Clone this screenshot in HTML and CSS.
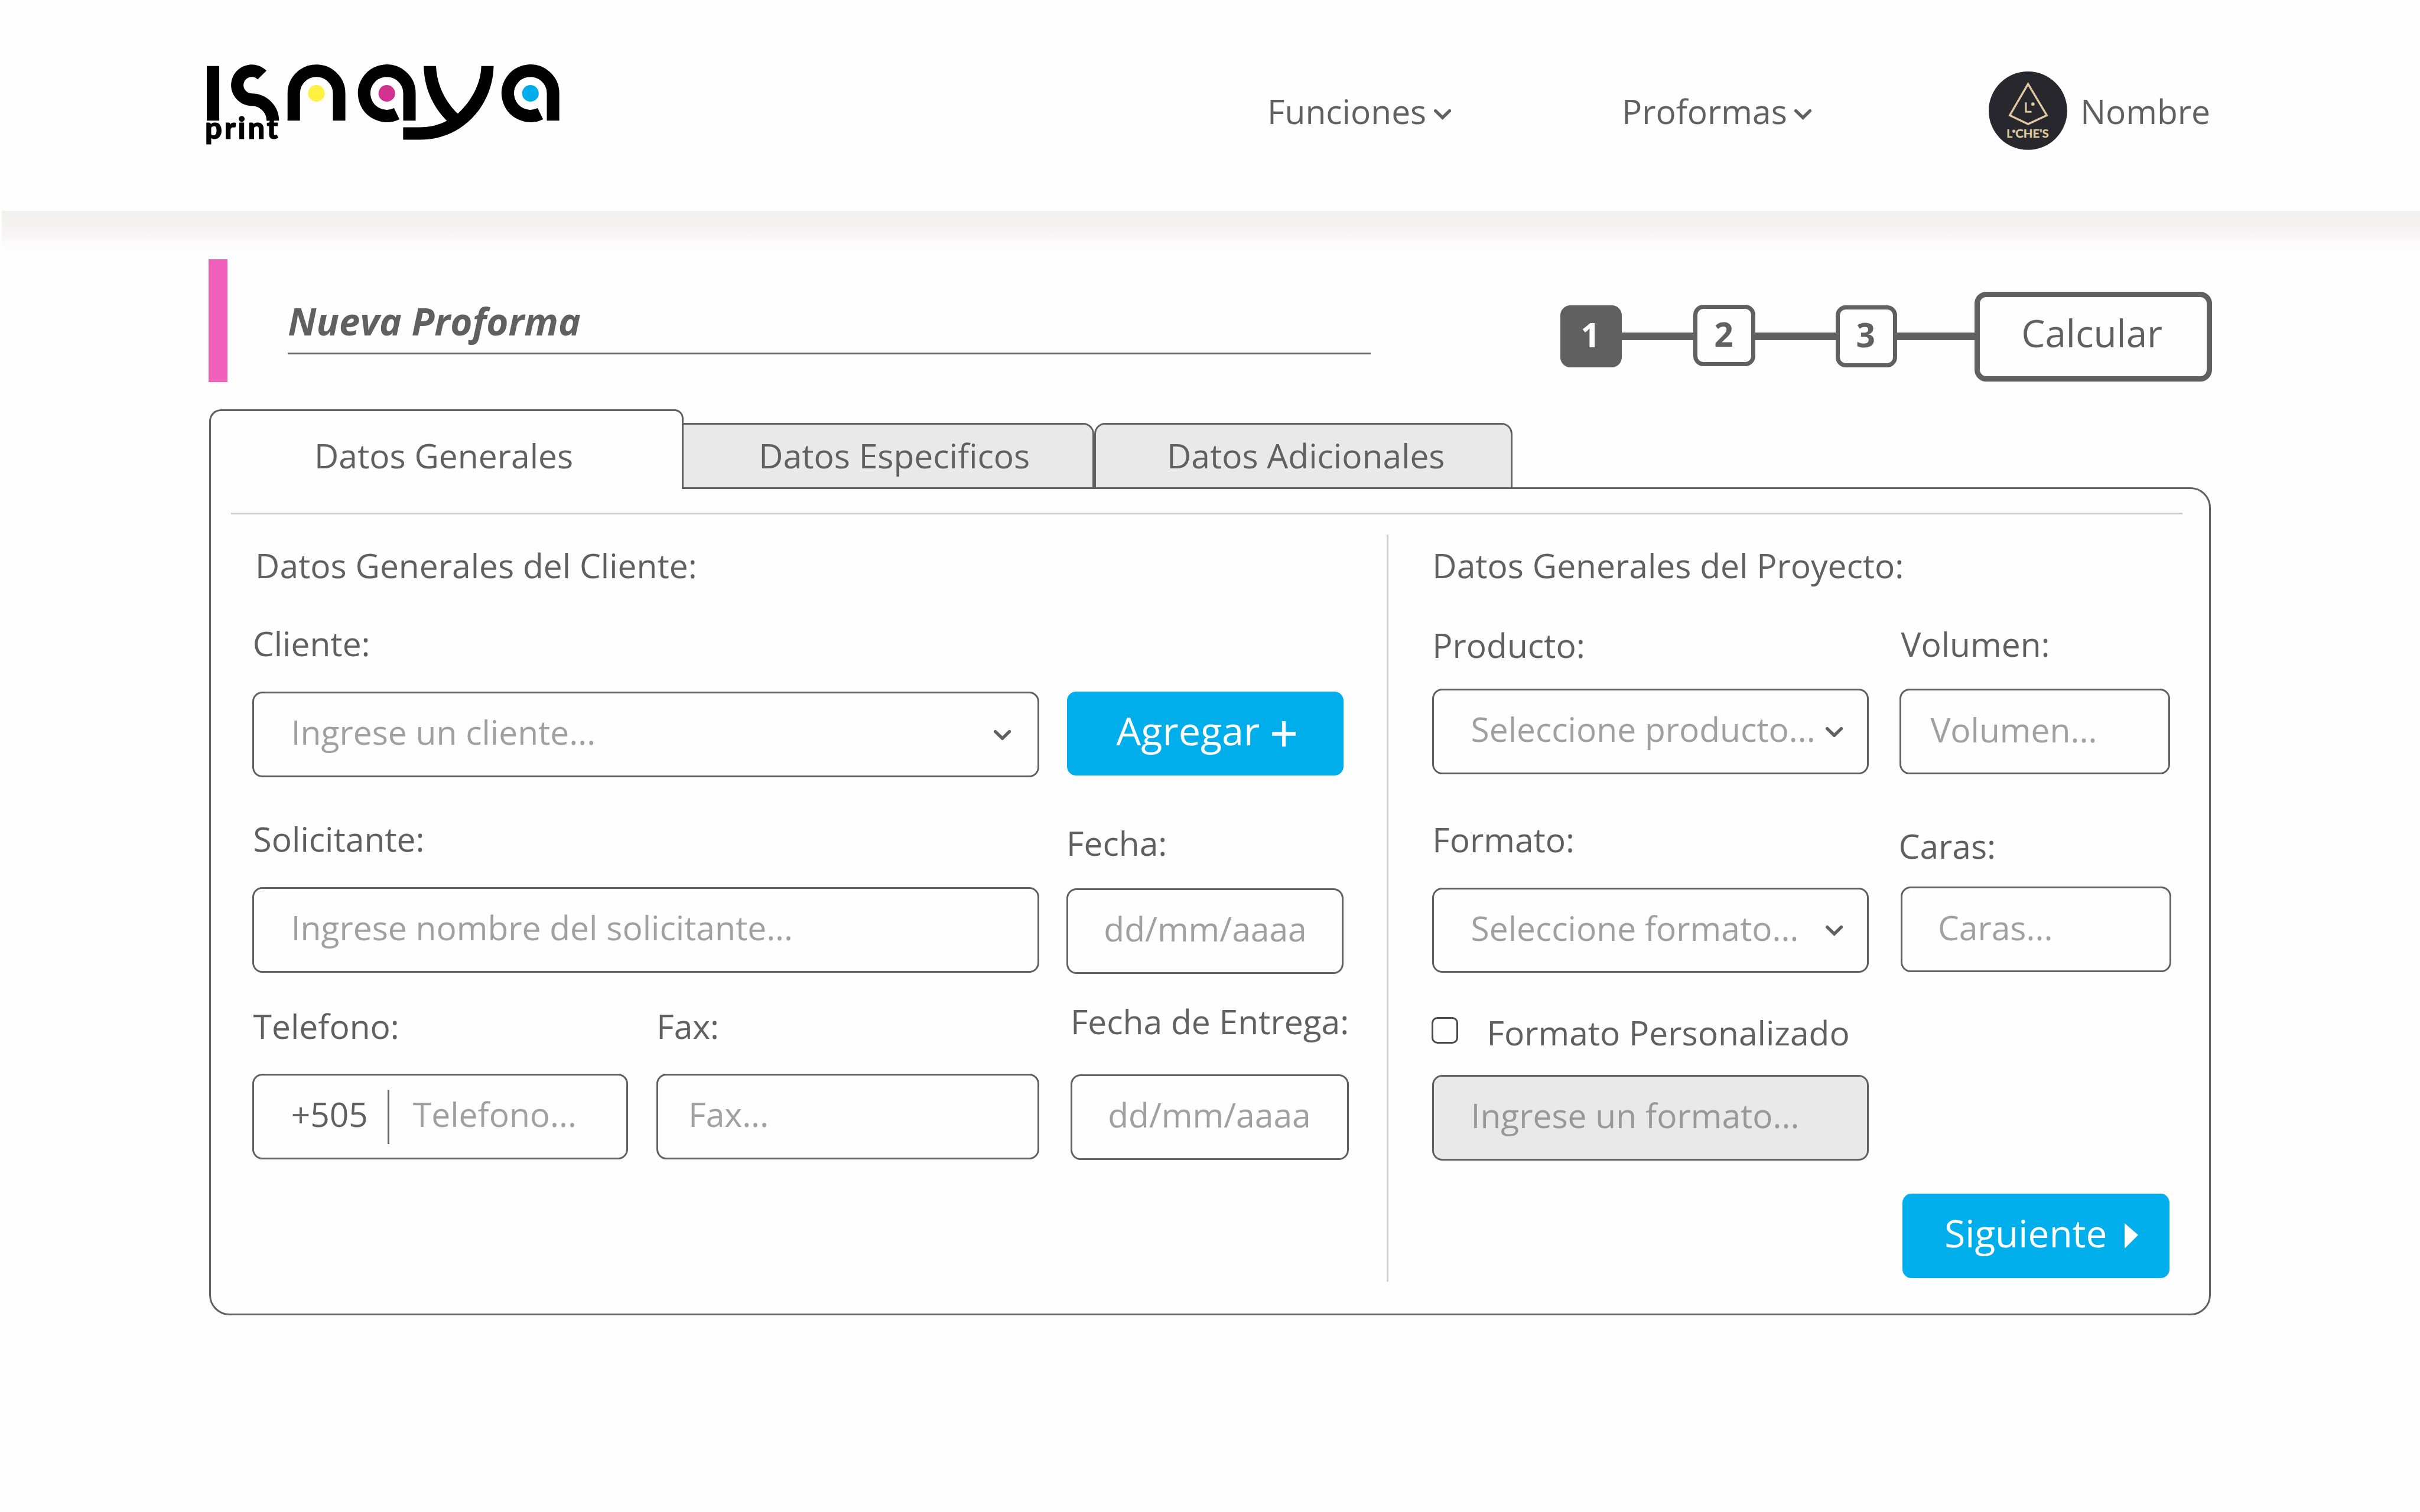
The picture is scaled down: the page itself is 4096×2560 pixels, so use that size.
FILE: index.html
```html
<!DOCTYPE html>
<html lang="es">
<head>
<meta charset="utf-8">
<title>Isnaya Print - Nueva Proforma</title>
<link rel="stylesheet" href="styles.css">
</head>
<body>
<header class="header">
  <svg class="logo" viewBox="455 140 780 185" role="img" aria-label="Isnaya print">
    <g fill="none" stroke="#000" stroke-width="27.4">
      <path d="M470 145V265.5"/>
      <path d="M578 164.9A31.8 31.8 0 1 0 555 219A46.8 46.8 0 0 1 601.8 265.5"/>
      <path d="M648 265.5V205.3A50 50 0 0 1 748 205.3V265.5"/>
      <path d="M903 265.5V205.3A49.9 49.9 0 1 0 875 250"/>
      <path d="M1219.6 265.5V205.3A49.9 49.9 0 1 0 1191.6 250"/>
    </g>
    <path d="M934.4 145H961.6C963 184 980 222 1009.6 250C1040 222 1060.5 184 1061.3 145H1088.6C1087 232 1020 307.3 928 307.3H889.1V280H924C948 280 968 275 985.5 265.7C952 232 935.5 190 934.4 145Z"/>
    <circle cx="698" cy="205.3" r="18.3" fill="#fff042"/>
    <circle cx="853.1" cy="205.3" r="18.3" fill="#d2338f"/>
    <circle cx="1169.7" cy="205.3" r="18.3" fill="#00adec"/>
    <text class="logo-sub" x="452.5" y="306" textLength="161">print</text>
  </svg>
  <nav class="nav">
    <a class="nav-item nav-funciones">Funciones<svg class="chevron" viewBox="0 0 38 23"><path d="M3.5 3.5L19 18.5L34.5 3.5"/></svg></a>
    <a class="nav-item nav-proformas">Proformas<svg class="chevron" viewBox="0 0 38 23"><path d="M3.5 3.5L19 18.5L34.5 3.5"/></svg></a>
    <a class="nav-item user">
      <svg class="avatar" viewBox="4383 158 173 173">
        <circle cx="4469.5" cy="244.5" r="86.5" fill="#27272d"/>
        <path d="M4469.8 185.5L4511 254.7L4469.8 274L4429.4 254.7Z" fill="none" stroke="#dec9a0" stroke-width="4.4"/>
        <path d="M4465 226V246.8H4477.3" fill="none" stroke="#dec9a0" stroke-width="4"/>
        <circle cx="4480.4" cy="229.8" r="3.8" fill="#dec9a0"/>
        <text class="avatar-text" x="4422.5" y="304.2">L</text>
        <circle cx="4438.6" cy="289.8" r="3.4" fill="#dec9a0"/>
        <text class="avatar-text" x="4442" y="304.2" textLength="73.5" lengthAdjust="spacingAndGlyphs">CHE'S</text>
      </svg>Nombre</a>
  </nav>
</header>
<div class="header-shadow"></div>

<main class="main">
  <section class="title-row">
    <span class="accent"></span>
    <h1 class="title">Nueva Proforma</h1>
    <div class="steps">
      <span class="step step-active">1</span>
      <span class="link link-1"></span>
      <span class="step step-2">2</span>
      <span class="link link-2"></span>
      <span class="step">3</span>
      <span class="link link-3"></span>
      <a class="calc">Calcular</a>
    </div>
  </section>

  <div class="tabs">
    <a class="tab tab-active">Datos Generales</a>
    <a class="tab tab-especificos">Datos Especificos</a>
    <a class="tab tab-adicionales">Datos Adicionales</a>
  </div>

  <section class="panel">
    <hr class="rule">
    <div class="columns">
      <div class="client">
        <h2 class="heading">Datos Generales del Cliente:</h2>
        <div class="group">
          <div class="client-main">
            <div class="label label-cliente">Cliente:</div>
            <div class="field select field-cliente">Ingrese un cliente...<svg class="chevron" viewBox="0 0 38 23"><path d="M3.5 3.5L19 18.5L34.5 3.5"/></svg></div>
            <div class="label label-solicitante">Solicitante:</div>
            <div class="field field-solicitante">Ingrese nombre del solicitante...</div>
            <div class="phones">
              <div class="phone">
                <div class="label">Telefono:</div>
                <div class="field field-phone"><span class="prefix">+505</span><span class="bar"></span>Telefono...</div>
              </div>
              <div class="fax">
                <div class="label">Fax:</div>
                <div class="field field-fax">Fax...</div>
              </div>
            </div>
          </div>
          <div class="client-side">
            <a class="button add">Agregar<svg class="plus" viewBox="0 0 52 56"><path d="M26 0V56M0 28H52"/></svg></a>
            <div class="label label-fecha">Fecha:</div>
            <div class="field field-fecha">dd/mm/aaaa</div>
            <div class="delivery">
              <div class="label">Fecha de Entrega:</div>
              <div class="field field-entrega">dd/mm/aaaa</div>
            </div>
          </div>
        </div>
      </div>
      <span class="divider"></span>
      <div class="project">
        <h2 class="heading">Datos Generales del Proyecto:</h2>
        <div class="group">
          <div class="project-main">
            <div class="label label-producto">Producto:</div>
            <div class="field select field-producto">Seleccione producto...<svg class="chevron" viewBox="0 0 38 23"><path d="M3.5 3.5L19 18.5L34.5 3.5"/></svg></div>
            <div class="label label-formato">Formato:</div>
            <div class="field select field-formato">Seleccione formato...<svg class="chevron" viewBox="0 0 38 23"><path d="M3.5 3.5L19 18.5L34.5 3.5"/></svg></div>
            <div class="custom"><span class="checkbox"></span><span class="custom-text">Formato Personalizado</span></div>
            <div class="field field-custom">Ingrese un formato...</div>
          </div>
          <div class="project-side">
            <div class="label label-volumen">Volumen:</div>
            <div class="field field-volumen">Volumen...</div>
            <div class="label label-caras">Caras:</div>
            <div class="field field-caras">Caras...</div>
            <a class="button next">Siguiente<svg class="play" viewBox="0 0 30 56"><path d="M0 0L30 26L0 56Z"/></svg></a>
          </div>
        </div>
      </div>
    </div>
  </section>
</main>
</body>
</html>
```
FILE: styles.css
```css
/* The design canvas is 5334 units wide; 1rem is 100 units. */
html { font-size: calc(100vw / 53.34); }
* { box-sizing: border-box; }
body {
  margin: 0;
  background: #fefefe;
  color: #606060;
  font-family: "Open Sans", sans-serif;
  font-size: .7415rem;
  line-height: 1rem;
  min-height: 33.34rem;
  overflow: hidden;
}
h1, h2 { margin: 0; font-size: inherit; font-weight: 400; }
svg { display: block; flex: none; }

/* Header */
.header {
  display: flex;
  align-items: flex-start;
  height: 4.646rem;
  padding: 1.4rem 0 0 4.55rem;
}
.logo { width: 7.8rem; height: 1.85rem; overflow: visible; }
.logo-sub { font: 900 66px Lato, sans-serif; fill: #000; stroke: #000; stroke-width: 1.6px; stroke-linejoin: round; }
.nav { display: flex; padding-top: .18rem; margin-left: 15.585rem; }
.nav-item { display: flex; align-items: center; height: 1.76rem; white-space: nowrap; }
.nav-funciones { width: 7.811rem; }
.nav-proformas { width: 8.084rem; }
.nav-item .chevron { margin: .13rem 0 0 .16rem; }
.chevron { width: .38rem; height: .23rem; }
.chevron path { fill: none; stroke: #606060; stroke-width: 7; stroke-linecap: round; }
.avatar { width: 1.73rem; height: 1.73rem; margin: 0 .295rem .03rem 0; }
.avatar-text { font: 700 24.5px Lato, sans-serif; fill: #dec9a0; stroke: #dec9a0; stroke-width: .5px; }
.header-shadow {
  height: .9rem;
  margin-left: .04rem;
  background: linear-gradient(#f2f1f0, #f3f2f1 28%, #f5f3f4 50%, #fbf9fa 74%, #fefefe);
}

/* Title and steps */
.main { padding: .172rem 0 0 4.59rem; }
.title-row { display: flex; height: 2.71rem; }
.accent { width: .41rem; margin-left: .01rem; background: #f05fba; }
.title {
  width: 23.863rem;
  height: 2.096rem;
  margin-left: 1.337rem;
  padding-top: .867rem;
  border-bottom: 3px solid #606060;
  font-size: .83rem;
  font-weight: 700;
  font-style: italic;
}
.steps { display: flex; align-items: center; padding-top: .69rem; margin-left: 4.178rem; }
.step {
  display: flex;
  align-items: center;
  justify-content: center;
  width: 1.36rem;
  height: 1.36rem;
  padding: 0 .03rem .08rem 0;
  border: 7px solid #606060;
  border-radius: .22rem;
  font-weight: 700;
}
.step-active { background: #606060; color: #fefefe; }
.step-2 { margin-bottom: .04rem; }
.link { height: .175rem; background: #606060; }
.link-1 { width: 1.58rem; }
.link-2 { width: 1.77rem; }
.link-3 { width: 1.71rem; }
.calc {
  display: flex;
  align-items: center;
  justify-content: center;
  width: 5.235rem;
  height: 1.98rem;
  padding: 0 .07rem .14rem 0;
  border: 9.5px solid #606060;
  border-radius: .26rem;
  font-size: .83rem;
}

/* Tabs */
.tabs { display: flex; align-items: flex-end; height: 1.71rem; margin: .6rem 0 0 .015rem; }
.tab {
  height: 1.42rem;
  padding-top: .185rem;
  border: 3px solid #606060;
  border-bottom: 0;
  background: #e9e9e9;
  white-space: nowrap;
}
.tab-active {
  position: relative;
  width: 10.465rem;
  height: 1.75rem;
  margin-bottom: -.04rem;
  padding: .475rem 0 0 2.285rem;
  border-radius: .26rem .2rem 0 0;
  background: #fefefe;
}
.tab-especificos { width: 9.05rem; padding-left: 1.655rem; border-left: 0; border-top-right-radius: .24rem; }
.tab-adicionales { width: 9.22rem; padding-left: 1.56rem; border-radius: .24rem .24rem 0 0; }

/* Panel */
.panel {
  width: 44.13rem;
  height: 18.265rem;
  margin-left: .015rem;
  border: 3px solid #606060;
  border-radius: 0 .45rem .45rem .45rem;
}
.rule { height: 3px; margin: .525rem .59rem 0 .45rem; border: 0; background: #cecece; }
.columns { display: flex; }
.client { width: 25.925rem; padding: .614rem 0 0 .923rem; }
.divider { width: 3px; height: 16.47rem; margin-top: .445rem; background: #cecece; }
.project { padding: .614rem 0 0 .963rem; }
.client .heading { padding-left: .06rem; }
.group { display: flex; }
.client-main { width: 17.337rem; margin-right: .603rem; }
.client-side { width: 6.2rem; padding-top: 2.29rem; }
.project-main { width: 9.62rem; margin-right: .68rem; }
.project-side { width: 6.1rem; }

/* Text sits slightly below the centre of its line */
.heading, .label, .custom-text { padding-top: .015rem; margin-bottom: -.015rem; }
.label { padding-left: .015rem; white-space: nowrap; }
.field {
  display: flex;
  align-items: center;
  height: 1.887rem;
  padding: 0 0 .095rem .81rem;
  border: 3px solid #606060;
  border-radius: .22rem;
  color: #a0a0a0;
  white-space: nowrap;
}
.select { justify-content: space-between; }
.select .chevron { margin-top: .12rem; }

.label-cliente { margin-top: .72rem; padding-left: .005rem; }
.field-cliente { margin-top: .576rem; padding-right: .58rem; }
.label-solicitante { margin-top: .849rem; }
.field-solicitante { margin-top: .571rem; }
.phones { display: flex; gap: .623rem; margin-top: .664rem; }
.phone { width: 8.282rem; }
.fax { width: 8.432rem; }
.fax .label { padding-left: 0; }
.field-phone, .field-fax { margin-top: .568rem; }
.field-phone { padding-left: .81rem; }
.field-fax { padding-left: .665rem; }
.prefix { color: #606060; }
.bar { width: 3px; height: 1.2rem; margin: .115rem .52rem 0 .43rem; background: #606060; }
.label + .field { position: static; }

.button {
  display: flex;
  align-items: center;
  height: 1.86rem;
  border-radius: .2rem;
  background: #00aeec;
  color: #fefefe;
  font-size: .8333rem;
  white-space: nowrap;
}
.add { width: 6.09rem; margin-left: .012rem; padding: 0 0 .146rem 1.085rem; font-size: .866rem; }
.plus { width: .523rem; height: .56rem; margin: .15rem 0 0 .27rem; }
.plus path { stroke: #fefefe; stroke-width: 8.2; }
.label-fecha { margin-top: .966rem; padding-left: 0; }
.field-fecha { width: 6.11rem; margin-top: .511rem; padding-left: .785rem; }
.delivery { width: 6.13rem; margin: .535rem 0 0 .09rem; }
.delivery .label { padding-left: 0; }
.field-entrega { margin-top: .681rem; padding-left: .785rem; }

.label-producto { margin-top: .75rem; padding-left: 0; }
.field-producto { margin-top: .481rem; padding-right: .53rem; }
.label-formato { margin-top: .924rem; padding-left: 0; }
.field-formato { margin-top: .571rem; padding-right: .53rem; }
.custom { display: flex; margin-top: .8rem; height: 1rem; white-space: nowrap; }
.checkbox {
  width: .59rem;
  height: .59rem;
  margin: .168rem .634rem 0 -.023rem;
  border: 3px solid #484848;
  border-radius: .13rem;
}
.field-custom { margin-top: .445rem; background: #e9e9e9; color: #989898; }
.label-volumen { margin-top: .73rem; padding-left: .03rem; }
.field-volumen { width: 5.958rem; margin-top: .501rem; padding-left: .64rem; }
.label-caras { margin-top: 1.069rem; padding-left: 0; margin-left: -.022rem; }
.field-caras { width: 5.958rem; margin: .408rem 0 0 .024rem; padding-left: .78rem; }
.next { width: 5.886rem; margin: 4.88rem 0 0 .059rem; padding: 0 0 .1rem .93rem; }
.play { width: .3rem; height: .56rem; margin: .11rem 0 0 .39rem; }
.play path { fill: #fefefe; }
```
